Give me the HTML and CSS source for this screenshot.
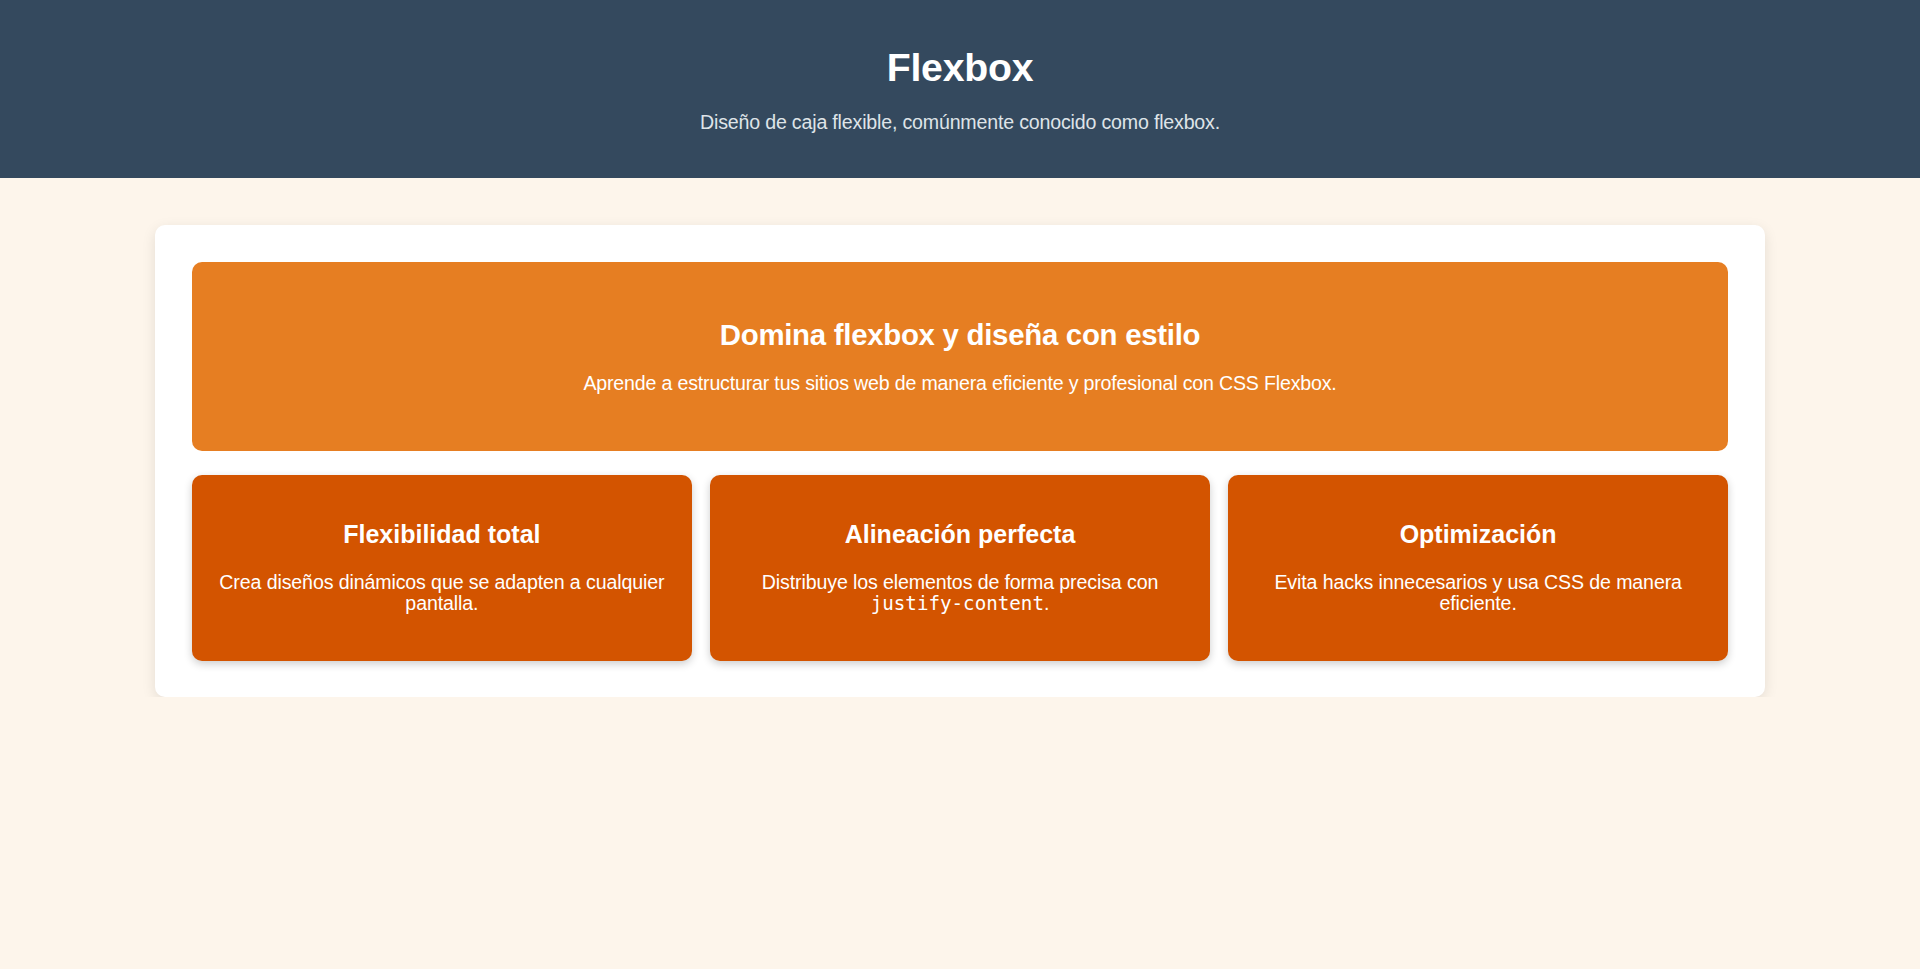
FILE: index.html
```html
<!DOCTYPE html>
<html lang="es">
<head>
<meta charset="utf-8">
<title>Flexbox</title>
<link rel="stylesheet" href="styles.css">
</head>
<body>
<header class="site-header">
  <h1 class="site-title">Flexbox</h1>
  <p class="site-subtitle">Diseño de caja flexible, comúnmente conocido como flexbox.</p>
</header>
<main class="container">
  <section class="hero">
    <h2 class="hero-title">Domina flexbox y diseña con estilo</h2>
    <p class="hero-text">Aprende a estructurar tus sitios web de manera eficiente y profesional con CSS Flexbox.</p>
  </section>
  <div class="features">
    <article class="feature">
      <h3 class="feature-title">Flexibilidad total</h3>
      <p class="feature-text">Crea diseños dinámicos que se adapten a cualquier pantalla.</p>
    </article>
    <article class="feature">
      <h3 class="feature-title">Alineación perfecta</h3>
      <p class="feature-text">Distribuye los elementos de forma precisa con <code class="code">justify-content</code>.</p>
    </article>
    <article class="feature">
      <h3 class="feature-title">Optimización</h3>
      <p class="feature-text">Evita hacks innecesarios y usa CSS de manera eficiente.</p>
    </article>
  </div>
</main>
</body>
</html>
```

FILE: styles.css
```css
html, body {
  margin: 0;
  padding: 0;
}

body {
  background: #fdf5eb;
  font-family: "Liberation Sans", Arial, Helvetica, sans-serif;
  color: #333;
}

.site-header {
  background: #34495e;
  color: #fff;
  text-align: center;
  padding: 45px 20px 44px;
}

.site-title {
  margin: 0;
  font-size: 39.2px;
  line-height: 45px;
  font-weight: 700;
  letter-spacing: -0.2px;
}

.site-subtitle {
  margin: 21px 0 0;
  font-size: 19.6px;
  line-height: 23px;
  color: #dfe4e8;
  letter-spacing: -0.18px;
}

.container {
  width: 80%;
  margin: 47px auto 0;
  padding: 36.7px;
  background: #fff;
  border-radius: 10px;
  box-shadow: 0 4px 14px rgba(0, 0, 0, 0.1);
}

.hero {
  background: #e67e22;
  color: #fff;
  text-align: center;
  border-radius: 10px;
  padding: 56px 20px 56px;
}

.hero-title {
  margin: 0;
  font-size: 29.4px;
  line-height: 34px;
  font-weight: 700;
  letter-spacing: -0.28px;
}

.hero-text {
  margin: 20px 0 0;
  font-size: 19.6px;
  line-height: 23px;
  letter-spacing: -0.18px;
}

.features {
  display: flex;
  gap: 18.4px;
  margin-top: 24.5px;
}

.feature {
  flex: 1;
  background: #d35400;
  color: #fff;
  text-align: center;
  border-radius: 10px;
  padding: 45px 20px 46.5px;
  box-shadow: 0 3px 8px rgba(0, 0, 0, 0.2);
}

.feature-title {
  margin: 0;
  font-size: 25px;
  line-height: 29px;
  font-weight: 700;
}

.feature-text {
  margin: 23px 0 0;
  font-size: 19.6px;
  line-height: 20.5px;
  letter-spacing: -0.12px;
}

.code {
  font-family: "DejaVu Sans Mono", "Liberation Mono", monospace;
  font-size: 19.2px;
  letter-spacing: 0;
}
```
